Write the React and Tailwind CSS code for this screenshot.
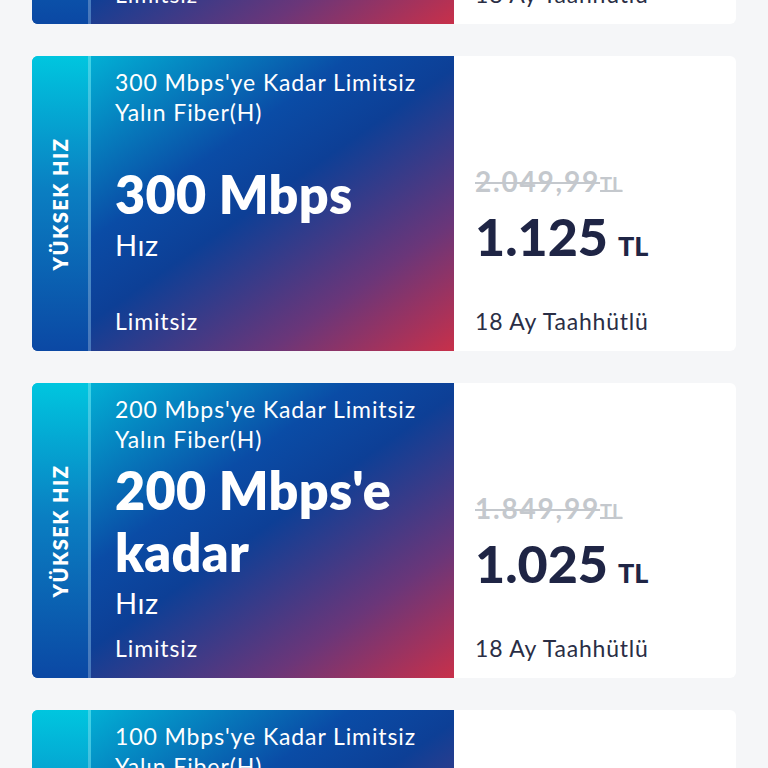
import React from 'react';

const plans = [
    { sub: "500 Mbps'ye Kadar Limitsiz", big: "500 Mbps'e kadar", old: '2.349,99', price: '1.325' },
    { sub: "300 Mbps'ye Kadar Limitsiz", big: '300 Mbps', old: '2.049,99', price: '1.125' },
    { sub: "200 Mbps'ye Kadar Limitsiz", big: "200 Mbps'e kadar", old: '1.849,99', price: '1.025' },
    { sub: "100 Mbps'ye Kadar Limitsiz", big: "100 Mbps'e kadar", old: '1.649,99', price: '925' },
];

const PlanCard = ({ plan, className = '' }) => {
    return (
        <div className={`flex h-[295px] shrink-0 overflow-hidden rounded-md bg-white ${className}`}>
            <div className="flex w-[422px] bg-[linear-gradient(to_bottom_right,#00c6df_0%,#0a4ca6_38%,#0d3f96_52%,#6a3679_78%,#c8304a_100%)]">
                {/* side label */}
                <div className="flex w-[59px] shrink-0 items-center justify-center border-r-[3px] border-white/25 bg-[linear-gradient(to_bottom,#00c6df,#0a7fc2_45%,#0b48a4)]">
                    <span className="-rotate-90 whitespace-nowrap text-[20px] font-extrabold tracking-[1.5px] text-white">
                        YÜKSEK HIZ
                    </span>
                </div>
                <div className="flex flex-1 flex-col pl-6 pr-4 pt-[11px] pb-[15px] text-white">
                    <div className="text-[23px] leading-[30px] tracking-[0.9px]">
                        {plan.sub}
                        <br />
                        Yalın Fiber(H)
                    </div>
                    <div className="flex flex-1 flex-col justify-center">
                        <div className="pt-1 text-[52px] font-extrabold leading-[62px] tracking-[0.3px]">{plan.big}</div>
                        <div className="mt-0.5 text-[29px] leading-[36px] tracking-[0.5px]">Hız</div>
                    </div>
                    <div className="mt-[11px] text-[23px] leading-[30px] tracking-[0.9px]">Limitsiz</div>
                </div>
            </div>
            <div className="flex flex-1 flex-col pl-[21px] pt-[109px] pb-[15px]">
                <div className="text-[28px] font-bold leading-[33px] tracking-[1.8px] text-[#c4c8cd] line-through decoration-2">
                    {plan.old}
                    <span className="text-[20px] tracking-normal">TL</span>
                </div>
                <div className="mt-[7px] flex items-baseline text-[#1f2545]">
                    <span className="text-[52px] font-black leading-[56px]">{plan.price}</span>
                    <span className="ml-[10px] text-[27px] font-black">TL</span>
                </div>
                <div className="mt-auto text-[23px] leading-[30px] tracking-[0.8px] text-[#2a2e45]">18 Ay Taahhütlü</div>
            </div>
        </div>
    );
};

export default function App() {
    return (
        <div className="min-h-screen overflow-hidden bg-[#f5f6f8] font-['Lato','Noto_Sans',sans-serif]">
            <div className="flex flex-col gap-8 px-8">
                {plans.map((plan, i) => (
                    <PlanCard key={plan.sub} plan={plan} className={i === 0 ? 'mt-[-271px]' : ''} />
                ))}
            </div>
        </div>
    );
}
